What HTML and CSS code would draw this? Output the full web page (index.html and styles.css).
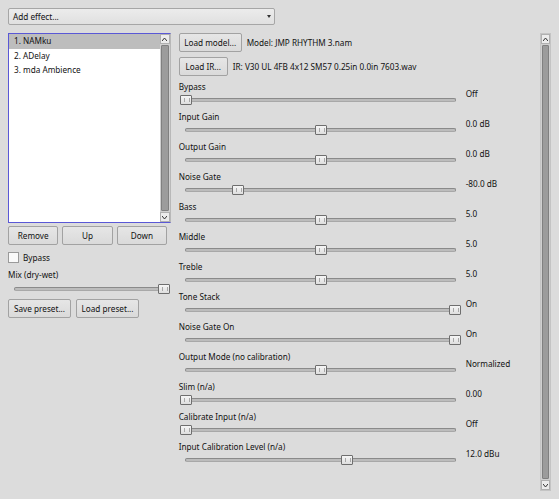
FILE: index.html
```html
<!DOCTYPE html>
<html>
<head>
<meta charset="utf-8">
<link rel="stylesheet" href="styles.css">
</head>
<body>
<div class="app">
  <div class="combo"><span class="combo-text">Add effect...</span><span class="combo-arrow"><svg width="4" height="3" viewBox="0 0 4 3"><path d="M0 0H4L2 3Z" fill="#333"/></svg></span></div>
  <div class="main">
    <div class="left">
      <div class="list">
        <div class="items">
          <div class="item sel">1. NAMku</div>
          <div class="item">2. ADelay</div>
          <div class="item">3. mda Ambience</div>
        </div>
        <div class="vscroll small">
          <div class="sarrow"><svg width="5" height="3" viewBox="0 0 5 3"><path d="M0 3L2.5 0L5 3" fill="none" stroke="#333" stroke-width="1"/></svg></div>
          <div class="strack"><div class="sthumb"></div></div>
          <div class="sarrow"><svg width="5" height="3" viewBox="0 0 5 3"><path d="M0 0L2.5 3L5 0" fill="none" stroke="#333" stroke-width="1"/></svg></div>
        </div>
      </div>
      <div class="btnrow three">
        <div class="btn">Remove</div>
        <div class="btn">Up</div>
        <div class="btn">Down</div>
      </div>
      <div class="check"><span class="box"></span><span>Bypass</span></div>
      <div class="lbl mixlbl">Mix (dry-wet)</div>
      <div class="slider mix"><div class="track"></div><div class="handle" style="left:149px"></div></div>
      <div class="btnrow presets">
        <div class="btn w63">Save preset...</div>
        <div class="btn w63">Load preset...</div>
      </div>
    </div>
    <div class="right">
      <div class="loadrow"><div class="btn w63">Load model...</div><span class="info">Model: JMP RHYTHM 3.nam</span></div>
      <div class="loadrow second"><div class="btn w49">Load IR...</div><span class="info">IR: V30 UL 4FB 4x12 SM57 0.25in 0.0in 7603.wav</span></div>
      <div class="params">
        <div class="param"><div class="plabel">Bypass</div><div class="slider"><div class="track"></div><div class="handle" style="left:0px"></div></div><div class="pval">Off</div></div>
        <div class="param"><div class="plabel">Input Gain</div><div class="slider"><div class="track"></div><div class="handle" style="left:135px"></div></div><div class="pval">0.0 dB</div></div>
        <div class="param"><div class="plabel">Output Gain</div><div class="slider"><div class="track"></div><div class="handle" style="left:135px"></div></div><div class="pval">0.0 dB</div></div>
        <div class="param"><div class="plabel">Noise Gate</div><div class="slider"><div class="track"></div><div class="handle" style="left:52px"></div></div><div class="pval">-80.0 dB</div></div>
        <div class="param"><div class="plabel">Bass</div><div class="slider"><div class="track"></div><div class="handle" style="left:135px"></div></div><div class="pval">5.0</div></div>
        <div class="param"><div class="plabel">Middle</div><div class="slider"><div class="track"></div><div class="handle" style="left:135px"></div></div><div class="pval">5.0</div></div>
        <div class="param"><div class="plabel">Treble</div><div class="slider"><div class="track"></div><div class="handle" style="left:135px"></div></div><div class="pval">5.0</div></div>
        <div class="param"><div class="plabel">Tone Stack</div><div class="slider"><div class="track"></div><div class="handle" style="left:269px"></div></div><div class="pval">On</div></div>
        <div class="param"><div class="plabel">Noise Gate On</div><div class="slider"><div class="track"></div><div class="handle" style="left:269px"></div></div><div class="pval">On</div></div>
        <div class="param"><div class="plabel">Output Mode (no calibration)</div><div class="slider"><div class="track"></div><div class="handle" style="left:135px"></div></div><div class="pval">Normalized</div></div>
        <div class="param"><div class="plabel">Slim (n/a)</div><div class="slider"><div class="track"></div><div class="handle" style="left:0px"></div></div><div class="pval">0.00</div></div>
        <div class="param"><div class="plabel">Calibrate Input (n/a)</div><div class="slider"><div class="track"></div><div class="handle" style="left:0px"></div></div><div class="pval">Off</div></div>
        <div class="param"><div class="plabel">Input Calibration Level (n/a)</div><div class="slider"><div class="track"></div><div class="handle" style="left:161px"></div></div><div class="pval">12.0 dBu</div></div>
      </div>
    </div>
    <div class="vscroll big">
      <div class="sarrow"><svg width="5" height="3" viewBox="0 0 5 3"><path d="M0 3L2.5 0L5 3" fill="none" stroke="#333" stroke-width="1"/></svg></div>
      <div class="strack"><div class="sthumb"></div></div>
      <div class="sarrow"><svg width="5" height="3" viewBox="0 0 5 3"><path d="M0 0L2.5 3L5 0" fill="none" stroke="#333" stroke-width="1"/></svg></div>
    </div>
  </div>
</div>
</body>
</html>
```

FILE: styles.css
```css
* { box-sizing: border-box; }
html, body { margin: 0; padding: 0; }
body {
  background: #dcdcdc;
  font-family: "Noto Sans", "Open Sans", sans-serif;
  font-size: 8.2px;
  color: #111;
  width: 559px;
  height: 499px;
  overflow: hidden;
}
.app { padding: 8px; }

.combo {
  width: 267px;
  height: 17px;
  border: 1px solid #a6a6a6;
  border-radius: 2px;
  background: linear-gradient(#ececec, #e0e0e0);
  display: flex;
  align-items: center;
  padding-left: 4px;
  padding-right: 3px;
}
.combo-text { flex: 1; line-height: 13px; }
.combo-arrow { display: flex; align-items: center; justify-content: center; width: 5px; height: 13px; }

.main { display: flex; align-items: flex-start; margin-top: 8px; }

.left { width: 163px; }
.list {
  height: 190px;
  border: 1px solid #5a58d6;
  border-right-color: #b8b8b8;
  background: #fff;
  display: flex;
}
.items { flex: 1; padding-top: 0; }
.item { height: 14.6px; line-height: 14.6px; padding-left: 5px; }
.item.sel { background: #bdbdbd; }

.vscroll { display: flex; flex-direction: column; background: #d0d0d0; }
.vscroll.small { width: 10px; }
.vscroll.big { width: 11px; height: 458px; margin-left: 6px; border: 1px solid #c4c4c4; }
.sarrow {
  height: 10px;
  flex: none;
  background: #ececec;
  border: 1px solid #b0b0b0;
  display: flex; align-items: center; justify-content: center;
}
.strack { flex: 1; padding: 1px 1px; display: flex; }
.sthumb { flex: 1; background: #9c9c9c; border: 1px solid #808080; border-radius: 1px; }

.btn {
  height: 19px;
  border: 1px solid #a2a2a2;
  border-radius: 2px;
  background: linear-gradient(#e6e6e6, #dadada);
  display: flex; align-items: center; justify-content: center;
  white-space: nowrap;
  flex: none;
}
.btnrow { display: flex; }
.btnrow.three { width: 159px; margin-top: 3px; gap: 4px; }
.btnrow.three .btn { flex: 1; }
.btnrow.presets { margin-top: 3px; gap: 5px; }
.w63 { width: 63px; }
.w49 { width: 49px; }

.check { display: flex; align-items: center; margin-top: 7px; height: 11px; }
.box { width: 11px; height: 11px; border: 1px solid #9a9a9a; background: #fafafa; margin-right: 4px; flex: none; }
.mixlbl { margin-top: 5px; line-height: 13px; }

.slider { position: relative; height: 14px; }
.slider.mix { width: 161px; margin-left: 1px; margin-top: 1px; }
.track {
  position: absolute; left: 5px; right: 5px; top: 5px;
  height: 4px;
  border: 1px solid #8a8a8a;
  border-bottom-color: #a8a8a8;
  border-radius: 2px;
  background: #bcbcbc;
}
.handle {
  position: absolute; top: 2px;
  width: 12px; height: 10px;
  border: 1px solid #6e6e6e;
  border-radius: 1px;
  background: linear-gradient(#f6f6f6, #dedede);
}
.handle::after {
  content: "";
  position: absolute; left: 3px; top: 2px;
  width: 4px; height: 4px;
  border-left: 1px solid #a8a8a8;
  border-right: 1px solid #a8a8a8;
}

.right { width: 356px; margin-left: 8px; }
.loadrow { display: flex; align-items: center; height: 19px; }
.loadrow.second { margin-top: 5px; }
.info { margin-left: 5px; white-space: nowrap; }
.params { margin-top: 4px; }
.param {
  display: grid;
  grid-template-columns: 282px auto;
  grid-template-rows: 13px 14px;
  column-gap: 5px;
  margin-bottom: 3px;
}
.plabel { grid-column: 1; grid-row: 1; line-height: 13px; white-space: nowrap; }
.param .slider { grid-column: 1; grid-row: 2; margin-left: 1px; width: 281px; }
.pval { grid-column: 2; grid-row: 1 / 3; align-self: center; line-height: 13px; white-space: nowrap; }
```
